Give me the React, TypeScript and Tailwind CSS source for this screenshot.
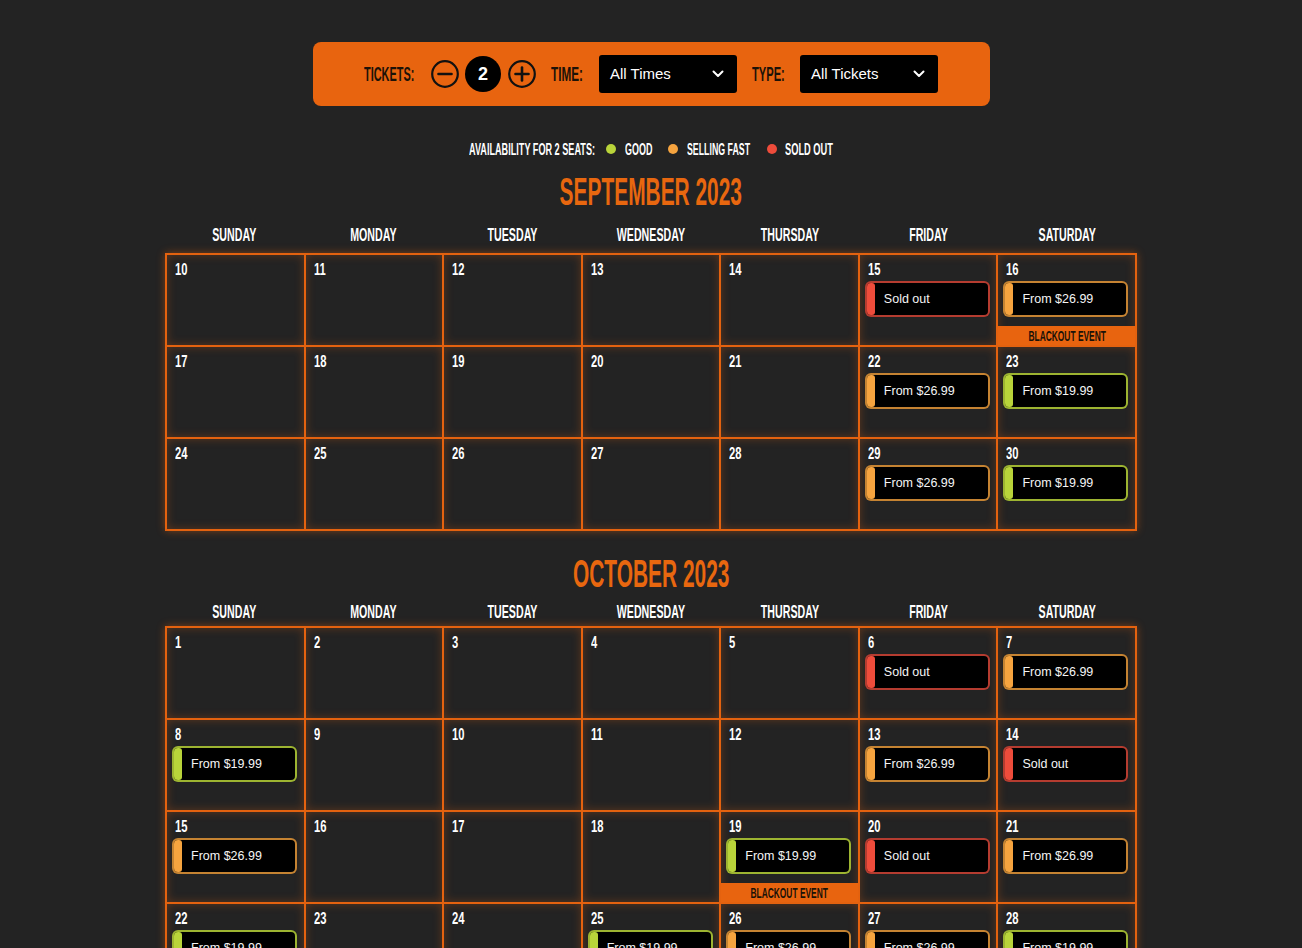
import type { ReactNode } from "react";

type Status = "good" | "fast" | "sold";
type Day = { d: number; s?: Status; blackout?: boolean };

const stripeColor: Record<Status, string> = {
  good: "bg-[#b9d43a]",
  fast: "bg-[#f6a43f]",
  sold: "bg-[#ee4c3b]",
};

const borderColor: Record<Status, string> = {
  good: "border-[#b9d43a]/85",
  fast: "border-[#f6a43f]/80",
  sold: "border-[#e24b3c]/80",
};

const ticketLabel: Record<Status, string> = {
  good: "From $19.99",
  fast: "From $26.99",
  sold: "Sold out",
};

const september: Day[] = [
  { d: 10 }, { d: 11 }, { d: 12 }, { d: 13 }, { d: 14 }, { d: 15, s: "sold" }, { d: 16, s: "fast", blackout: true },
  { d: 17 }, { d: 18 }, { d: 19 }, { d: 20 }, { d: 21 }, { d: 22, s: "fast" }, { d: 23, s: "good" },
  { d: 24 }, { d: 25 }, { d: 26 }, { d: 27 }, { d: 28 }, { d: 29, s: "fast" }, { d: 30, s: "good" },
];

const october: Day[] = [
  { d: 1 }, { d: 2 }, { d: 3 }, { d: 4 }, { d: 5 }, { d: 6, s: "sold" }, { d: 7, s: "fast" },
  { d: 8, s: "good" }, { d: 9 }, { d: 10 }, { d: 11 }, { d: 12 }, { d: 13, s: "fast" }, { d: 14, s: "sold" },
  { d: 15, s: "fast" }, { d: 16 }, { d: 17 }, { d: 18 }, { d: 19, s: "good", blackout: true }, { d: 20, s: "sold" }, { d: 21, s: "fast" },
  { d: 22, s: "good" }, { d: 23 }, { d: 24 }, { d: 25, s: "good" }, { d: 26, s: "fast" }, { d: 27, s: "fast" }, { d: 28, s: "good" },
  { d: 29, s: "fast" }, { d: 30 }, { d: 31 }, { d: 0 }, { d: 0 }, { d: 0 }, { d: 0 },
];

const weekdays = ["SUNDAY", "MONDAY", "TUESDAY", "WEDNESDAY", "THURSDAY", "FRIDAY", "SATURDAY"];

const sans = "font-['Liberation_Sans',Arial,sans-serif]";

// condensed label: bold Arial squeezed horizontally, kept inside a fixed-width box
function Label({ children, box, className }: { children: ReactNode; box: string; className: string }) {
  return (
    <span className={`inline-block shrink-0 overflow-visible whitespace-nowrap ${box}`}>
      <span className={`inline-block origin-left font-bold ${sans} ${className}`}>{children}</span>
    </span>
  );
}

function Ticket({ s }: { s: Status }) {
  return (
    <div className={`ml-[5px] mt-[4px] flex h-[36px] w-[125px] overflow-hidden rounded-[6px] border-2 bg-black ${borderColor[s]}`}>
      <span className={`w-[8px] rounded-r-[3px] ${stripeColor[s]}`} />
      <span className={`flex items-center pl-[9px] text-[12.5px] text-[#f5f5f5] ${sans}`}>{ticketLabel[s]}</span>
    </div>
  );
}

function Cell({ day }: { day: Day }) {
  return (
    <div className="flex h-[90px] flex-col bg-[#232323] shadow-[inset_0_0_10px_rgba(232,100,15,0.3)]">
      {day.d > 0 ? (
        <div className="h-[22px] pl-[8px] pt-[2px]">
          <span className={`inline-block origin-left scale-x-[0.7] text-[16px] font-bold leading-[18px] text-white ${sans}`}>
            {day.d}
          </span>
        </div>
      ) : null}
      {day.s ? <Ticket s={day.s} /> : null}
      {day.blackout ? (
        <div className="mt-auto flex h-[19px] items-center justify-center bg-[#e8640f]">
          <span className={`inline-block scale-x-[0.56] whitespace-nowrap text-[15px] font-bold leading-none text-[#1a1208] ${sans}`}>
            BLACKOUT EVENT
          </span>
        </div>
      ) : null}
    </div>
  );
}

function Month({
  title,
  days,
  className,
  headGap,
  gridGap,
}: {
  title: string;
  days: Day[];
  className: string;
  headGap: string;
  gridGap: string;
}) {
  return (
    <section className={`mx-auto w-[972px] ${className}`}>
      <h2 className="flex h-[40px] items-center justify-center">
        <span className={`inline-block scale-x-[0.55] whitespace-nowrap text-[38px] font-bold leading-none text-[#e8670f] ${sans}`}>
          {title}
        </span>
      </h2>
      <div className={`grid h-[20px] grid-cols-7 ${headGap}`}>
        {weekdays.map((w) => (
          <div key={w} className="flex items-center justify-center">
            <span className={`inline-block scale-x-[0.56] whitespace-nowrap text-[19px] font-bold leading-none text-white ${sans}`}>
              {w}
            </span>
          </div>
        ))}
      </div>
      <div className={`grid grid-cols-7 gap-[2px] bg-[#e4620f] p-[2px] shadow-[0_0_8px_rgba(232,100,15,0.45)] ${gridGap}`}>
        {days.map((day, i) => (
          <Cell key={i} day={day} />
        ))}
      </div>
    </section>
  );
}

function Chevron() {
  return (
    <svg width="14" height="14" viewBox="0 0 14 14" fill="none" stroke="white" strokeWidth="2" strokeLinecap="round" strokeLinejoin="round">
      <polyline points="2.5,4.5 7,9 11.5,4.5" />
    </svg>
  );
}

function Select({ value }: { value: string }) {
  return (
    <div className="flex h-[38px] w-[138px] items-center justify-between rounded-[3px] bg-black pl-[11px] pr-[12px]">
      <span className={`text-[15px] text-white ${sans}`}>{value}</span>
      <Chevron />
    </div>
  );
}

function RoundButton({ plus }: { plus?: boolean }) {
  return (
    <svg width="28" height="28" viewBox="0 0 28 28" fill="none" stroke="#111" strokeWidth="2.2" strokeLinecap="round">
      <circle cx="14" cy="14" r="12.8" />
      <line x1="7.5" y1="14" x2="20.5" y2="14" strokeWidth="2.6" />
      {plus ? <line x1="14" y1="7.5" x2="14" y2="20.5" strokeWidth="2.6" /> : null}
    </svg>
  );
}

export default function App() {
  return (
    <div className="min-h-screen bg-[#232323] pb-10 pt-[42px]">
      <div className="mx-auto flex h-[64px] w-[677px] items-center justify-center rounded-[8px] bg-[#e8640f]">
        <Label box="w-[50px]" className="scale-x-[0.52] text-[21px] text-[#1c1208]">TICKETS:</Label>
        <span className="ml-[17px]">
          <RoundButton />
        </span>
        <span className={`ml-[6px] flex h-[36px] w-[36px] items-center justify-center rounded-full bg-black text-[18px] font-bold text-white ${sans}`}>
          2
        </span>
        <span className="ml-[7px]">
          <RoundButton plus />
        </span>
        <span className="ml-[15px]">
          <Label box="w-[33px]" className="scale-x-[0.56] text-[21px] text-[#1c1208]">TIME:</Label>
        </span>
        <span className="ml-[15px]">
          <Select value="All Times" />
        </span>
        <span className="ml-[15px]">
          <Label box="w-[33px]" className="scale-x-[0.53] text-[21px] text-[#1c1208]">TYPE:</Label>
        </span>
        <span className="ml-[15px]">
          <Select value="All Tickets" />
        </span>
      </div>

      <div className="mt-[33px] flex h-[20px] items-center justify-center">
        <Label box="w-[130px]" className="scale-x-[0.57] text-[16px] leading-none text-white">AVAILABILITY FOR 2 SEATS:</Label>
        <span className="ml-[7px] h-[10px] w-[10px] rounded-full bg-[#b9d43a]" />
        <span className="ml-[9px]">
          <Label box="w-[28px]" className="scale-x-[0.56] text-[16px] leading-none text-white">GOOD</Label>
        </span>
        <span className="ml-[15px] h-[10px] w-[10px] rounded-full bg-[#f6a43f]" />
        <span className="ml-[9px]">
          <Label box="w-[64px]" className="scale-x-[0.55] text-[16px] leading-none text-white">SELLING FAST</Label>
        </span>
        <span className="ml-[16px] h-[10px] w-[10px] rounded-full bg-[#ee4c3b]" />
        <span className="ml-[8px]">
          <Label box="w-[48px]" className="scale-x-[0.58] text-[16px] leading-none text-white">SOLD OUT</Label>
        </span>
      </div>

      <Month title="SEPTEMBER 2023" days={september} className="mt-[13px]" headGap="mt-[12px]" gridGap="mt-[9px]" />
      <Month title="OCTOBER 2023" days={october} className="mt-[23px]" headGap="mt-[7px]" gridGap="mt-[5px]" />
    </div>
  );
}
